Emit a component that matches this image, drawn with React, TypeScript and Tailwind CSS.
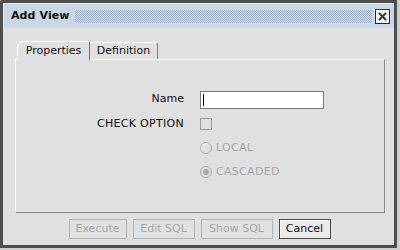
import React from "react";

const font = { fontFamily: '"DejaVu Sans", Tahoma, sans-serif' };

function Btn({ label, disabled, w }: { label: string; disabled?: boolean; w: string }) {
  return (
    <div
      className={`${w} h-[20px] flex items-center justify-center text-[11px] ${
        disabled
          ? "border border-[#b4b4b4] text-[#a6a6a6]"
          : "border border-[#4a4a4a] shadow-[inset_1px_1px_0_#ffffff] bg-[#eaeaea] text-[#111]"
      }`}
    >
      {label}
    </div>
  );
}

export default function App() {
  return (
    <div className="w-[400px] h-[250px] bg-[#cfcfcf] overflow-hidden" style={font}>
      <div className="w-[397px] h-[248px] border-[3px] border-[#4e4e4e] rounded-tl-[2px] bg-[#e0e0e0] flex flex-col">
        {/* title bar */}
        <div className="h-[25px] bg-[#cad7e5] border-l border-t border-[#e6edf5] flex items-center pl-[7px] pr-[4px]">
          <span className="font-bold text-[11px] text-[#111] tracking-[0.1px]">Add View</span>
          <div className="flex-1 h-[13px] ml-[5px] mr-[3px] bg-[conic-gradient(#a3b4c8_0_25%,transparent_0_50%,#a3b4c8_0_75%,transparent_0)] bg-[length:2px_2px]" />
          <div className="w-[15px] h-[15px] border border-[#2a2a2a] bg-[#eef2f6] flex items-center justify-center shadow-[inset_1px_1px_0_#ffffff]">
            <svg width="9" height="9" viewBox="0 0 9 9">
              <path d="M1 1 L8 8 M8 1 L1 8" stroke="#3a3a3a" strokeWidth="2" />
            </svg>
          </div>
        </div>

        {/* body */}
        <div className="flex-1 flex flex-col pl-[12px] pr-[8px] pt-[12px]">
          {/* tabs */}
          <div className="flex h-[19px] items-end">
            <div className="ml-[2px] h-[19px] w-[73px] bg-[#e0e0e0] border-t border-l border-white rounded-tl-[7px] border-r border-r-[#6e6e6e] flex items-center justify-center text-[11px] text-[#111] relative z-10 -mb-px">
              Properties
            </div>
            <div className="h-[17px] w-[68px] bg-[#e0e0e0] border-t border-white border-r border-r-[#7a7a7a] rounded-tr-[3px] flex items-center justify-center text-[11px] text-[#111]">
              Definition
            </div>
          </div>
          {/* panel */}
          <div className="w-[370px] h-[154px] border-t border-l border-white border-r border-b border-r-[#8a8a8a] border-b-[#8a8a8a] flex flex-col pt-[27px] text-[11px]">
            <div className="grid grid-cols-[168px_auto] gap-x-[16px]">
              <div className="h-[25px] flex items-center justify-end text-[#111]">Name</div>
              <div className="h-[25px] flex items-center">
                <div className="w-[124px] h-[18px] bg-white border border-[#7a7a7a] flex items-center pl-[2px]">
                  <div className="w-px h-[12px] bg-black" />
                </div>
              </div>

              <div className="h-[24px] flex items-center justify-end text-[#111] tracking-[0.3px]">CHECK OPTION</div>
              <div className="h-[24px] flex items-center">
                <div className="w-[12px] h-[12px] border border-[#9c9c9c]" />
              </div>

              <div className="h-[24px]" />
              <div className="h-[24px] flex items-center gap-[4px] text-[#a8a8a8] tracking-[0.3px]">
                <div className="w-[12px] h-[12px] rounded-full border border-[#a8a8a8] shadow-[inset_1px_1px_0_#ffffff]" />
                LOCAL
              </div>

              <div className="h-[24px]" />
              <div className="h-[24px] flex items-center gap-[4px] text-[#a8a8a8] tracking-[0.3px]">
                <div className="w-[12px] h-[12px] rounded-full border border-[#a8a8a8] flex items-center justify-center">
                  <div className="w-[6px] h-[6px] rounded-full bg-[#a8a8a8]" />
                </div>
                CASCADED
              </div>
            </div>
          </div>
          {/* buttons */}
          <div className="flex justify-center gap-[6px] mt-[6px] pr-[2px]">
            <Btn label="Execute" disabled w="w-[58px]" />
            <Btn label="Edit SQL" disabled w="w-[62px]" />
            <Btn label="Show SQL" disabled w="w-[72px]" />
            <Btn label="Cancel" w="w-[52px]" />
          </div>
        </div>
      </div>
    </div>
  );
}
